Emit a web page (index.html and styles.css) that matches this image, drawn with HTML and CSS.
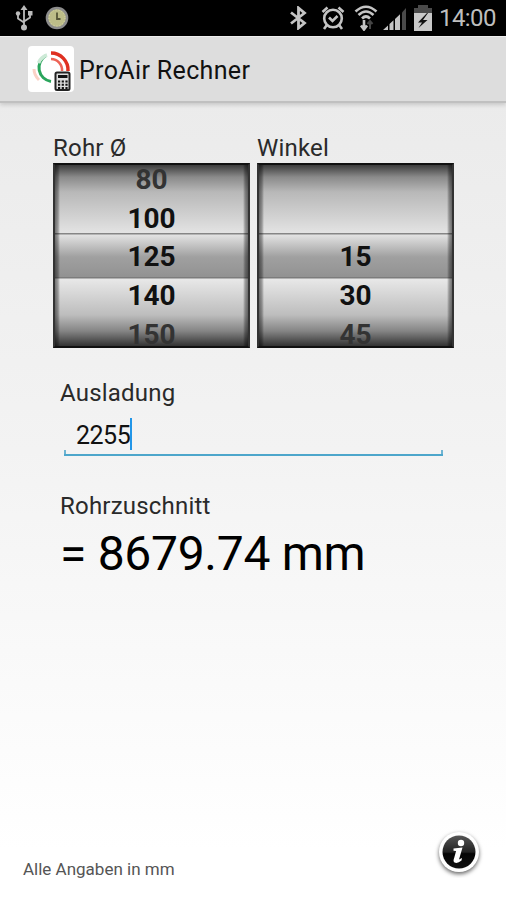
FILE: index.html
```html
<!DOCTYPE html>
<html lang="de">
<head>
  <meta charset="UTF-8">
  <title>ProAir Rechner</title>
  <link rel="stylesheet" href="styles.css">
</head>
<body>
  <div class="status-bar">
    <svg class="usb" width="18" height="26" viewBox="0 0 18 26" fill="none" stroke="#bbb" stroke-width="1.8">
      <path d="M9 3v20M3 8v5.500l6 4M15 8v4.500l-6 4"/>
      <path d="M9 0l3.500 5h-7z" fill="#bbb" stroke="none"/>
      <circle cx="9" cy="22.500" r="3" fill="#bbb" stroke="none"/>
      <circle cx="3" cy="8.500" r="2.200" fill="#bbb" stroke="none"/>
      <path d="M13 6h4.500v4.500H13z" fill="#bbb" stroke="none"/>
    </svg>
    <svg class="clock" width="24" height="24" viewBox="0 0 24 24">
      <circle cx="12" cy="12" r="10" fill="#bdbd88" stroke="#8c8c8c" stroke-width="2.600"/>
      <circle cx="12" cy="12" r="8" fill="none" stroke="#dadab0" stroke-width="1" stroke-dasharray="1 2"/>
      <path d="M12 6.500V13h3.500" fill="none" stroke="#555537" stroke-width="1.800"/>
    </svg>
    <div class="status-right">
      <svg width="18" height="24" viewBox="0 0 18 24" fill="none" stroke="#c4c4c4" stroke-width="2.800">
        <path d="M2 6.500L15.500 17l-6 5V2l6 5L2 17.500"/>
      </svg>
      <svg class="alarm" width="24" height="24" viewBox="0 0 24 24" fill="none" stroke="#c4c4c4" stroke-width="2.600">
        <circle cx="12" cy="12.500" r="8.800"/>
        <path d="M8 11.500l3.500 3.500 5-5M1.500 6l5-4.500M22.500 6l-5-4.500M5.500 19.500L3 23M18.500 19.500L21 23"/>
      </svg>
      <svg class="wifi" width="24" height="26" viewBox="0 0 24 26" fill="none" stroke="#c4c4c4" stroke-width="2.600">
        <path d="M1.500 6.500Q12-3 22.500 6.500M4.500 10Q12 3 19.500 10M8 13.500Q12 9.500 16 13.500"/>
        <path d="M10 15v9M7 20.500l3 4 3-4"/>
        <path d="M16 24v-7M13.500 19l2.500-3 2.500 3" stroke="#444" stroke-width="2"/>
      </svg>
      <svg class="signal" width="24" height="23" viewBox="0 0 24 23">
        <path d="M0 23l5-4.500V23zM6.500 17l4-3.800V23h-4zM12 12l5-4.700V23h-5z" fill="#c4c4c4"/>
        <path d="M19 5.500L23 1v22h-4z" fill="#4a4a4a"/>
      </svg>
      <svg class="battery" width="20" height="26" viewBox="0 0 20 26">
        <path d="M5 0h10v3h4v5H1V3h4z" fill="#4a4a4a"/>
        <path d="M1 8h18v18H1z" fill="#c9c9c9"/>
        <path d="M14 8L5 17.500h4L5.500 23l9-8h-4.500l5-7z" fill="#111"/>
      </svg>
      <span class="time">14:00</span>
    </div>
  </div>

  <div class="header">
    <svg class="logo" width="46" height="46" viewBox="0 0 46 46" fill="none">
      <rect width="46" height="46" rx="4" fill="#fff"/>
      <path d="M18 9.500A14 14 0 0 0 23 35.500" stroke="#2aa55c" stroke-width="3"/>
      <path d="M19 9A14 14 0 0 0 10.500 17" stroke="#cdead7" stroke-width="3.500"/>
      <path d="M23 7A17 17 0 0 1 40 25" stroke="#df3021" stroke-width="3.500"/>
      <path d="M23 13A11 11 0 0 1 34 25" stroke="#ed6356" stroke-width="2.500"/>
      <path d="M6 23q0 6 5 11" stroke="#fbd1c6" stroke-width="3"/>
      <rect x="27.500" y="26.500" width="14" height="17.500" rx="1.500" fill="#ddd" stroke="#222" stroke-width="2"/>
      <path d="M30 30.500h9.500" stroke="#111" stroke-width="3"/>
      <path d="M30 35.500h10M30 38.800h10M30 42h10" stroke="#111" stroke-width="2" stroke-dasharray="2.200 1.500"/>
    </svg>
    <h1>ProAir Rechner</h1>
  </div>

  <div class="content">
    <div class="wheels">
      <div class="wheel-column">
        <label>Rohr Ø</label>
        <div class="wheel">
          <div class="items">
            <span>80</span>
            <span>100</span>
            <span>125</span>
            <span>140</span>
            <span>150</span>
          </div>
        </div>
      </div>
      <div class="wheel-column">
        <label>Winkel</label>
        <div class="wheel">
          <div class="items">
            <span></span>
            <span></span>
            <span>15</span>
            <span>30</span>
            <span>45</span>
          </div>
        </div>
      </div>
    </div>

    <div class="form">
      <label class="input-label">Ausladung</label>
      <div class="input"><span class="value">2255</span><span class="cursor"></span></div>
      <label class="result-label">Rohrzuschnitt</label>
      <div class="result">= 8679.74 mm</div>
    </div>
  </div>

  <div class="footer">
    <span class="hint">Alle Angaben in mm</span>
    <svg class="info" width="50" height="50" viewBox="0 0 50 50">
      <defs>
        <linearGradient id="shine" x1="0" y1="0" x2="0" y2="1">
          <stop offset="0" stop-color="#555"/>
          <stop offset=".5" stop-color="#222"/>
          <stop offset=".55" stop-color="#050505"/>
          <stop offset="1" stop-color="#111"/>
        </linearGradient>
      </defs>
      <circle class="info-ring" cx="25" cy="24" r="20" fill="#fff"/>
      <circle cx="25" cy="24" r="16.500" fill="url(#shine)"/>
      <circle cx="27" cy="15" r="3.200" fill="#fff"/>
      <path d="M19.500 20.500l9-1-3.500 12 3-1.500-.5 2.500q-4 3.500-7 2-1.800-1-.2-5l1.800-6.500-2.600-.3z" fill="#fff"/>
    </svg>
  </div>
</body>
</html>
```
FILE: styles.css
```css
* {
  box-sizing: border-box;
}
body {
  margin: 0;
  height: 900px;
  display: flex;
  flex-direction: column;
  overflow: hidden;
  font-family: Roboto, "Liberation Sans", sans-serif;
  color: #111;
  background: linear-gradient(#ebebeb 100px, #f3f3f3 450px, #fff 850px);
}
.status-bar {
  height: 36px;
  flex: none;
  display: flex;
  align-items: center;
  padding: 0 11px 0 15px;
  background: #000;
}
.clock {
  margin-left: 12px;
}
.status-right {
  display: flex;
  align-items: center;
  margin-left: auto;
}
.alarm {
  margin-left: 14px;
}
.wifi {
  margin-left: 9px;
}
.signal {
  margin-left: 5px;
}
.battery {
  margin-left: 6px;
}
.time {
  width: 56px;
  margin-left: 6px;
  font-size: 24px;
  line-height: 34px;
  letter-spacing: -0.6px;
  white-space: nowrap;
  color: #bebebe;
}
.header {
  height: 67px;
  flex: none;
  display: flex;
  align-items: center;
  padding-left: 28px;
  border-top: 1px solid #eee;
  border-bottom: 2px solid #c0c0c0;
  background: #ddd;
  box-shadow: 0 2px 4px rgba(0,0,0,0.15);
}
h1 {
  margin: 2px 0 0 5px;
  font-size: 25px;
  font-weight: normal;
  letter-spacing: 0.35px;
}
label {
  display: block;
  font-size: 24px;
  line-height: 30px;
  letter-spacing: 0.2px;
  color: #2a2a2a;
}
.wheels {
  display: flex;
  gap: 7px;
  padding: 30px 0 0 53px;
}
.wheel-column {
  width: 197px;
}
.wheel {
  height: 185px;
  overflow: hidden;
  border: 2px solid #111;
  border-left-color: #333;
  border-right-color: #333;
  background:
    linear-gradient(90deg, rgba(0,0,0,0.5), rgba(0,0,0,0.3) 3px, transparent 5px, transparent 188px, rgba(0,0,0,0.3) 190px, rgba(0,0,0,0.5)),
    linear-gradient(#3c3c3c, #8a8a8a 12px, #b8b8b8 27px, #e3e3e3 68px, #858585 68px, #858585 69px, #e2e2e2 70px, #a0a0a0 92px, #929292 112px, #7c7c7c 112px, #7c7c7c 113px, #e8e8e8 114px, #bdbdbd 150px, #858585 166px, #333 181px);
}
.items {
  display: flex;
  flex-direction: column;
  margin-top: -4px;
}
.items span {
  height: 38.5px;
  flex: none;
  text-align: center;
  font-size: 28px;
  font-weight: bold;
  line-height: 38.5px;
}
.items span:first-child {
  color: #333;
}
.items span:last-child {
  height: 31px;
  padding-top: 8px;
  line-height: 23px;
  color: #333;
}
.form {
  padding: 30px 63px 0 60px;
}
.input {
  height: 43px;
  display: flex;
  align-items: flex-start;
  margin: 5px 0 0 4px;
  padding: 5px 0 0 12px;
  border-bottom: 2px solid #4da6cb;
  background:
    linear-gradient(#6fb4d2, #6fb4d2) left bottom / 2px 4px no-repeat,
    linear-gradient(#6fb4d2, #6fb4d2) right bottom / 2px 4px no-repeat;
}
.value {
  font-size: 25px;
  line-height: 36px;
  letter-spacing: -0.5px;
}
.cursor {
  width: 2px;
  height: 32px;
  background: #2296e8;
}
.result-label {
  margin-top: 35px;
}
.result {
  margin-top: 3px;
  font-size: 48px;
  line-height: 60px;
  letter-spacing: -0.3px;
  color: #000;
  white-space: nowrap;
}
.footer {
  display: flex;
  align-items: flex-end;
  justify-content: space-between;
  margin-top: auto;
  padding: 0 22px 22px 23px;
}
.hint {
  font-size: 17px;
  line-height: 18px;
  color: #555;
}
.info-ring {
  filter: drop-shadow(0 2px 2px rgba(0,0,0,0.6));
}
```
